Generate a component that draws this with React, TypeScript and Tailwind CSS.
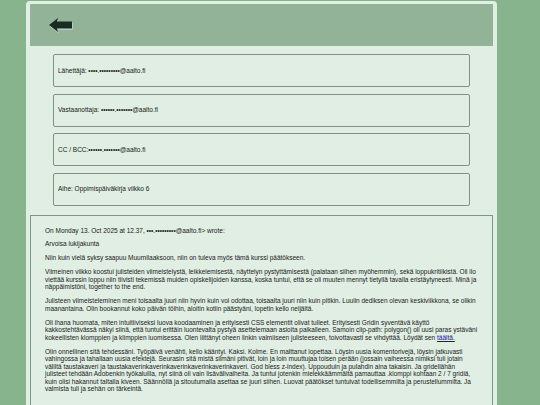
import React from "react";

const F = { fontFamily: '"Liberation Sans", Arial, sans-serif' };

function Field({ children }: { children: React.ReactNode }) {
  return (
    <div className="h-[33px] border border-[#7f9283] rounded-[2px] flex items-center pl-[4px] text-[6.5px] text-[#1a1a1a]">
      {children}
    </div>
  );
}

export default function App() {
  return (
    <div className="w-[540px] h-[405px] overflow-hidden bg-[#87b48d]" style={F}>
      <div className="ml-[26px] w-[471px] mt-[1px] h-[420px] bg-[#e0eee3] rounded-t-[4px] pt-[3px] px-[4px]">
        <div className="h-[42px] bg-[#92b398] flex items-center pl-[18px]">
          <svg width="25" height="17" viewBox="0 0 25 17">
            <polygon points="1,8.5 10,1.5 9,5 24,5 24,12 9,12 10,15.5" fill="#c9d6cc" transform="translate(0.7,0.7)" />
            <polygon points="1,8 10,1 9,4.5 24,4.5 24,11.5 9,11.5 10,15" fill="#182c24" />
          </svg>
        </div>
        <div className="flex flex-col gap-[6.5px] pl-[23px] pr-[23px] pt-[8px]">
          <Field>Lähettäjä: ••••.•••••••••@aalto.fi</Field>
          <Field>Vastaanottaja: ••••••.•••••••@aalto.fi</Field>
          <Field>CC / BCC:••••••.•••••••@aalto.fi</Field>
          <Field>Aihe: Oppimispäiväkirja viikko 6</Field>
        </div>
        <div className="mt-[9px] border border-[#7d9882] px-[14px] pt-[11px] text-[6.5px] text-[#1a1a1a] leading-[1.15] flex flex-col gap-[6.5px]">
          <p>On Monday 13. Oct 2025 at 12.37, •••.•••••••••@aalto.fi&gt; wrote:</p>
          <p>Arvoisa lukijakunta</p>
          <p>Niin kuin vielä syksy saapuu Muumilaaksoon, niin on tuleva myös tämä kurssi päätökseen.</p>
          <p>
            Viimeinen viikko koostui julisteiden viimeistelystä, leikkelemisestä, näyttelyn pystyttämisestä (palataan siihen myöhemmin), sekä loppukritiikistä. Oli ilo viettää kurssin loppu niin tiivisti tekemissä muiden opiskelijoiden kanssa, koska tuntui, että se oli muuten mennyt tietyllä tavalla eristäytyneesti. Minä ja näppäimistöni, together to the end.
          </p>
          <p>
            Julisteen viimeisteleminen meni toisaalta juuri niin hyvin kuin voi odottaa, toisaalta juuri niin kuin pitikin. Luulin dediksen olevan keskiviikkona, se olikin maanantaina. Olin bookannut koko päivän töihin, aloitin kotiin päästyäni, lopetin kello neljältä.
          </p>
          <p>
            Oli ihana huomata, miten intuitiiviseksi luova koodaaminen ja erityisesti CSS elementit olivat tulleet. Erityisesti Gridin syventävä käyttö kakkostehtävässä näkyi siinä, että tuntui erittäin luontevalta pystyä asettelemaan asioita paikalleen. Samoin clip-path: polygon() oli uusi paras ystäväni kokeellisten klomppien ja klimppien luomisessa. Olen liittänyt oheen linkin valmiiseen julisteeseen, toivottavasti se vihdyttää. Löydät sen{" "}
            <a className="text-[#1a0dab] underline">täältä.</a>
          </p>
          <p>
            Olin onnellinen sitä tehdessäni. Työpäivä venähti, kello kääntyi. Kaksi. Kolme. En malttanut lopettaa. Löysin uusia komentorivejä, löysin jatkuvasti vahingossa ja tahallaan uusia efektejä. Seurasin sitä mistä silmäni pitivät, loin ja loin muuttujaa toisen perään (jossain vaiheessa nimiksi tuli jotain väliltä taustakaveri ja taustakaverinkaverinkaverinkaverinkaverinkaveri. God bless z-index). Uppouduin ja pulahdin aina takaisin. Ja gridellähän julisteet tehdään Adobenkin työkaluilla, nyt siinä oli vain lisävälivaiheita. Ja tuntui jotenkin mielekkäämmältä pamauttaa .klomppi kohtaan 2 / 7 gridiä, kuin olisi hakannut taltalla kiveen. Säännöllä ja sitoutumalla asettaa se juuri siihen. Luovat päätökset tuntuivat todellisemmilta ja perustellummilta. Ja valmista tuli ja sehän on tärkeintä.
          </p>
          <div className="h-[40px]" />
        </div>
      </div>
    </div>
  );
}
